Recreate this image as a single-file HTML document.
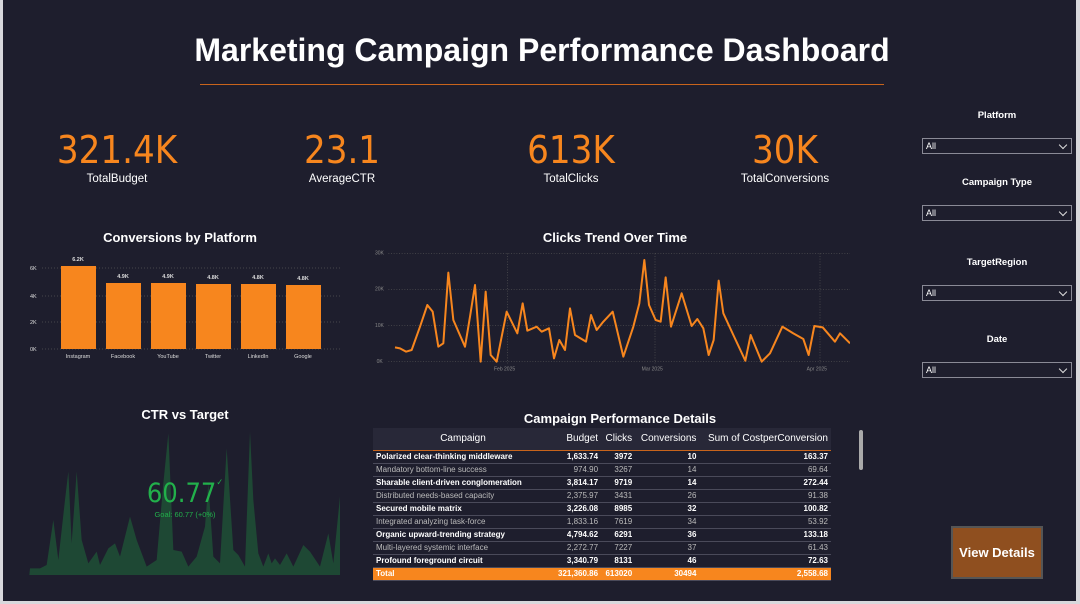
<!DOCTYPE html><html><head><meta charset="utf-8"><style>
*{margin:0;padding:0;box-sizing:border-box}
html,body{width:1080px;height:604px;overflow:hidden}
body{background:#1e1e2d;font-family:"DejaVu Sans Condensed","Liberation Sans",sans-serif;color:#fff;position:relative}
.a{position:absolute}
.kn{position:absolute;color:#f7861e;font-size:38px;text-align:center;width:240px;top:128px;font-family:"DejaVu Sans Condensed","Liberation Sans",sans-serif}
.kl{position:absolute;font-size:11.5px;text-align:center;width:240px;top:173px;font-family:"Liberation Sans",sans-serif}
.t{position:absolute;font-weight:bold;font-size:13px;text-align:center;font-family:"Liberation Sans",sans-serif}
.sl{position:absolute;left:922px;width:150px;height:16px;border:1px solid #8a8a96;font-size:9px;padding-left:3px;line-height:14px;font-family:"Liberation Sans",sans-serif}
.sl:after{content:"";position:absolute;right:5px;top:3px;width:5px;height:5px;border-right:1.5px solid #ddd;border-bottom:1.5px solid #ddd;transform:rotate(45deg)}
.st{position:absolute;left:922px;width:150px;text-align:center;font-size:9.5px;font-weight:bold;font-family:"Liberation Sans",sans-serif}
table{border-collapse:collapse;font-family:"Liberation Sans",sans-serif;font-size:8px}
td{height:13px;padding:0 3px;border-bottom:1px solid #4a4a5a;white-space:nowrap}
td.r{text-align:right}
tr.b td{font-weight:bold;color:#fff}
tr.n td{color:#bbb}
</style></head><body>
<div class="a" style="left:0;top:0;width:3px;height:604px;background:#d8d8dc"></div>
<div class="a" style="left:0;top:601px;width:1080px;height:3px;background:#d8d8dc"></div>
<div class="a" style="left:1076px;top:0;width:4px;height:604px;background:#d8d8dc"></div>
<div class="a" style="left:150px;top:32px;width:784px;text-align:center;font-size:32px;font-weight:bold;font-family:'Liberation Sans',sans-serif">Marketing Campaign Performance Dashboard</div>
<div class="a" style="left:200px;top:84px;width:684px;height:1px;background:#c8641c"></div>
<div class="kn" style="left:-3px">321.4K</div><div class="kl" style="left:-3px">TotalBudget</div>
<div class="kn" style="left:222px">23.1</div><div class="kl" style="left:222px">AverageCTR</div>
<div class="kn" style="left:451px">613K</div><div class="kl" style="left:451px">TotalClicks</div>
<div class="kn" style="left:665px">30K</div><div class="kl" style="left:665px">TotalConversions</div>

<div class="t" style="left:30px;top:230px;width:300px">Conversions by Platform</div>
<svg class="a" style="left:0;top:250px" width="360" height="115" font-family="Liberation Sans" font-size="5.5" fill="#ddd">
<g stroke="#555" stroke-dasharray="1 2" stroke-width="0.7"><line x1="42" x2="342" y1="18" y2="18"/><line x1="42" x2="342" y1="46" y2="46"/><line x1="42" x2="342" y1="72" y2="72"/><line x1="42" x2="342" y1="99" y2="99"/></g>
<text x="30" y="20">6K</text><text x="30" y="48">4K</text><text x="30" y="74">2K</text><text x="30" y="101">0K</text>
<g fill="#f7861e"><rect x="61" y="16" width="35" height="83"/><rect x="106" y="33" width="35" height="66"/><rect x="151" y="33" width="35" height="66"/><rect x="196" y="34" width="35" height="65"/><rect x="241" y="34" width="35" height="65"/><rect x="286" y="35" width="35" height="64"/></g>
<g text-anchor="middle" font-weight="bold"><text x="78" y="11">6.2K</text><text x="123" y="28">4.9K</text><text x="168" y="28">4.9K</text><text x="213" y="29">4.8K</text><text x="258" y="29">4.8K</text><text x="303" y="30">4.8K</text></g>
<g text-anchor="middle"><text x="78" y="108">Instagram</text><text x="123" y="108">Facebook</text><text x="168" y="108">YouTube</text><text x="213" y="108">Twitter</text><text x="258" y="108">LinkedIn</text><text x="303" y="108">Google</text></g>
</svg>

<div class="t" style="left:465px;top:230px;width:300px">Clicks Trend Over Time</div>
<svg class="a" style="left:370px;top:240px" width="480" height="140" viewBox="0 0 1440 420" font-family="Liberation Sans" font-size="15" fill="#888">
<g stroke="#555" stroke-dasharray="3 5" stroke-width="2"><line x1="55" x2="1440" y1="40" y2="40"/><line x1="55" x2="1440" y1="148" y2="148"/><line x1="55" x2="1440" y1="257" y2="257"/><line x1="55" x2="1440" y1="365" y2="365"/><line x1="412" x2="412" y1="40" y2="370"/><line x1="855" x2="855" y1="40" y2="370"/><line x1="1350" x2="1350" y1="40" y2="370"/></g>
<text x="15" y="44">30K</text><text x="15" y="152">20K</text><text x="15" y="261">10K</text><text x="20" y="369">0K</text>
<text x="372" y="392">Feb 2025</text><text x="815" y="392">Mar 2025</text><text x="1310" y="392">Apr 2025</text>
<polyline fill="none" stroke="#f7861e" stroke-width="6" stroke-linejoin="round" points="75,322 90,325 108,335 125,330 150,260 172,195 188,215 205,320 220,310 235,98 250,240 285,320 300,230 315,135 332,365 347,155 362,345 380,365 410,215 442,280 458,190 472,272 500,260 515,275 537,265 552,355 568,300 585,330 600,205 615,285 648,305 663,225 680,270 700,245 728,215 760,350 790,260 808,190 823,60 837,195 857,240 872,245 887,112 903,260 935,160 965,258 982,237 1000,265 1016,345 1031,300 1046,122 1060,220 1090,285 1126,362 1142,285 1175,365 1200,340 1237,260 1270,280 1300,297 1316,345 1333,258 1358,262 1395,305 1410,280 1440,310"/>
</svg>

<div class="t" style="left:35px;top:407px;width:300px">CTR vs Target</div>
<svg class="a" style="left:0;top:400px" width="370" height="204" viewBox="0 0 1110 612">
<polygon fill="#1e4834" points="88,525 90,505 120,505 140,495 160,360 175,480 195,300 205,215 215,430 230,215 245,420 265,490 290,455 300,495 325,445 345,430 360,470 390,350 410,420 440,500 470,480 490,250 505,100 520,450 545,455 565,500 590,470 615,380 625,250 640,470 660,490 680,145 700,450 715,465 735,500 750,95 760,300 775,460 790,500 805,460 815,490 825,475 840,495 860,460 880,500 910,435 930,455 960,500 985,400 1000,490 1020,290 1020,525"/>
</svg>
<div class="a" style="left:0;top:478px;width:370px;text-align:center;color:#22b04b;font-size:27px">60.77<span style="font-size:9px;vertical-align:top">✓</span></div>
<div class="a" style="left:0;top:510px;width:370px;text-align:center;color:#22b04b;font-size:7.5px;font-family:'Liberation Sans',sans-serif">Goal: 60.77 (+0%)</div>

<div class="t" style="left:470px;top:411px;width:300px">Campaign Performance Details</div>
<div class="a" style="left:373px;top:428px;width:458px;height:152px">
<table style="width:458px">
<tr style="background:#282838"><td style="height:22px;text-align:center;font-size:10px;border-bottom:1px solid #c8641c;width:180px">Campaign</td><td class="r" style="font-size:10px;border-bottom:1px solid #c8641c">Budget</td><td class="r" style="font-size:10px;border-bottom:1px solid #c8641c">Clicks</td><td class="r" style="font-size:10px;border-bottom:1px solid #c8641c">Conversions</td><td class="r" style="font-size:10px;border-bottom:1px solid #c8641c">Sum of CostperConversion</td></tr>
<tr class="b"><td>Polarized clear-thinking middleware</td><td class="r">1,633.74</td><td class="r">3972</td><td class="r">10</td><td class="r">163.37</td></tr>
<tr class="n"><td>Mandatory bottom-line success</td><td class="r">974.90</td><td class="r">3267</td><td class="r">14</td><td class="r">69.64</td></tr>
<tr class="b"><td>Sharable client-driven conglomeration</td><td class="r">3,814.17</td><td class="r">9719</td><td class="r">14</td><td class="r">272.44</td></tr>
<tr class="n"><td>Distributed needs-based capacity</td><td class="r">2,375.97</td><td class="r">3431</td><td class="r">26</td><td class="r">91.38</td></tr>
<tr class="b"><td>Secured mobile matrix</td><td class="r">3,226.08</td><td class="r">8985</td><td class="r">32</td><td class="r">100.82</td></tr>
<tr class="n"><td>Integrated analyzing task-force</td><td class="r">1,833.16</td><td class="r">7619</td><td class="r">34</td><td class="r">53.92</td></tr>
<tr class="b"><td>Organic upward-trending strategy</td><td class="r">4,794.62</td><td class="r">6291</td><td class="r">36</td><td class="r">133.18</td></tr>
<tr class="n"><td>Multi-layered systemic interface</td><td class="r">2,272.77</td><td class="r">7227</td><td class="r">37</td><td class="r">61.43</td></tr>
<tr class="b"><td>Profound foreground circuit</td><td class="r">3,340.79</td><td class="r">8131</td><td class="r">46</td><td class="r">72.63</td></tr>
<tr style="background:#f7861e;font-weight:bold"><td>Total</td><td class="r">321,360.86</td><td class="r">613020</td><td class="r">30494</td><td class="r">2,558.68</td></tr>
</table></div>
<div class="a" style="left:859px;top:430px;width:4px;height:40px;background:#aaa;border-radius:2px"></div>

<div class="st" style="top:110px">Platform</div><div class="sl" style="top:138px">All</div>
<div class="st" style="top:177px">Campaign Type</div><div class="sl" style="top:205px">All</div>
<div class="st" style="top:257px">TargetRegion</div><div class="sl" style="top:285px">All</div>
<div class="st" style="top:334px">Date</div><div class="sl" style="top:362px">All</div>

<div class="a" style="left:951px;top:526px;width:92px;height:53px;background:#8f4f1f;border:2px solid #555;text-align:center;line-height:49px;font-weight:bold;font-size:13px;white-space:nowrap;font-family:'Liberation Sans',sans-serif">View Details</div>
</body></html>
